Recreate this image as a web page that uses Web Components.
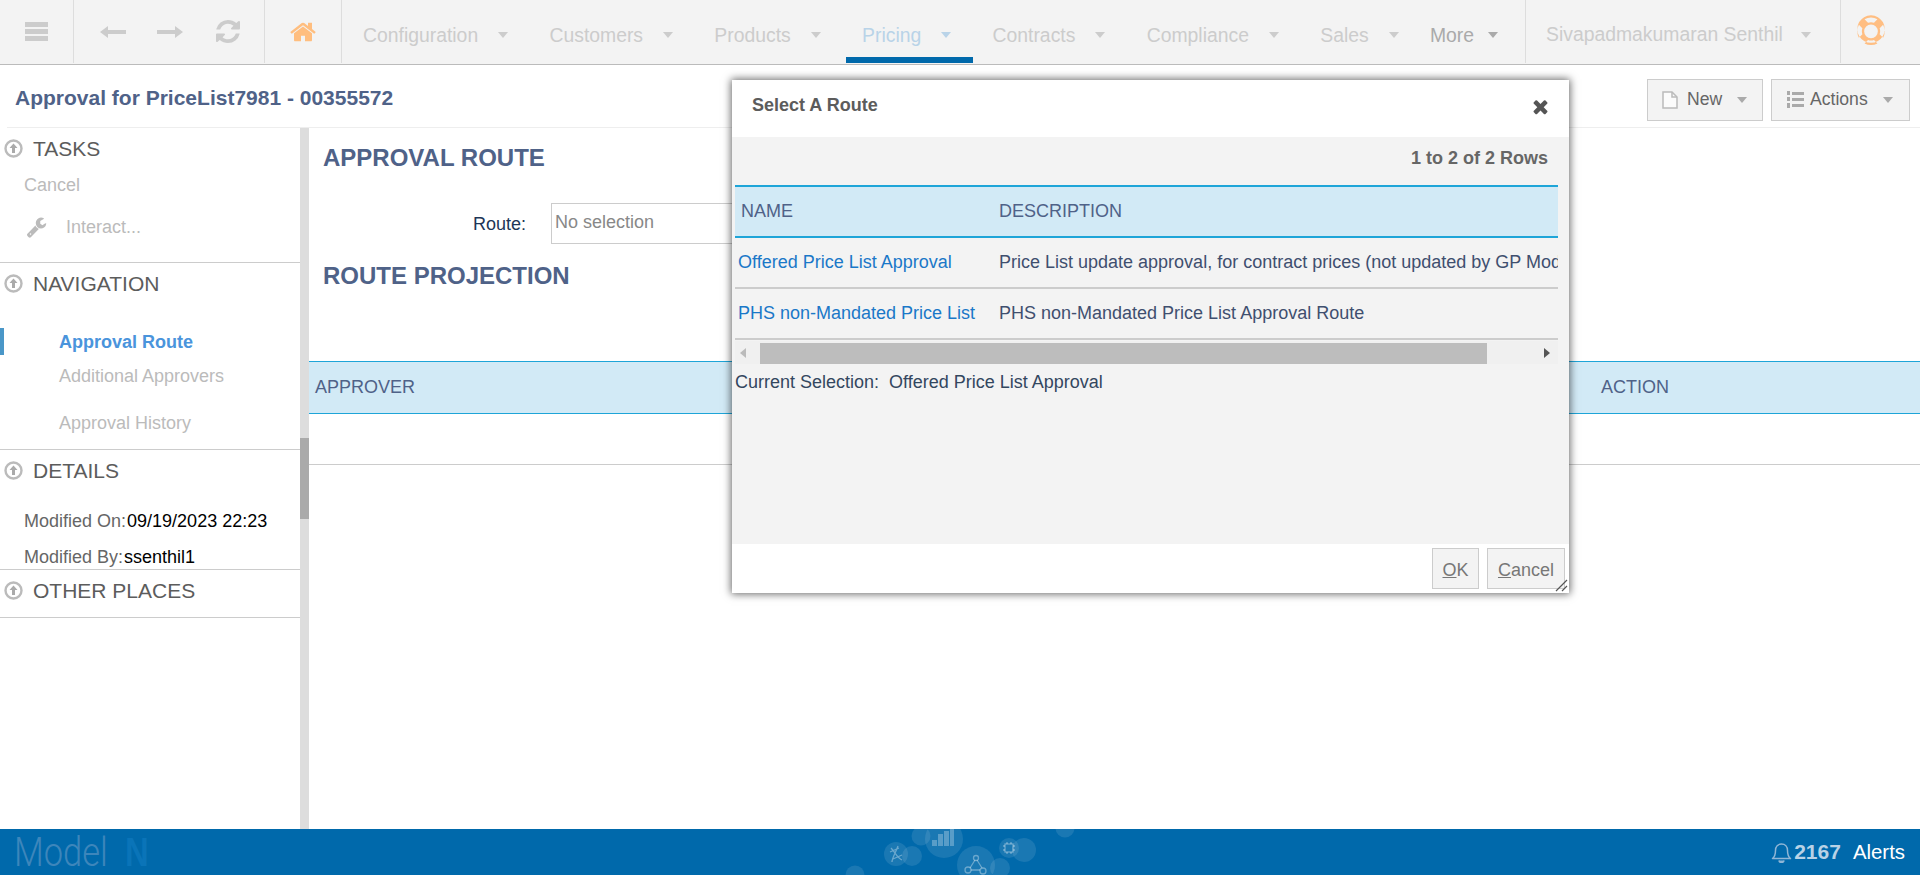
<!DOCTYPE html>
<html lang="en"><head><meta charset="utf-8"><title>Approval Route</title>
<style>
html,body{margin:0;height:875px;overflow:hidden;background:#fff;font-family:"Liberation Sans",Arial,sans-serif;font-size:18px}
</style></head><body>
<app-shell>
  <top-nav slot="top"></top-nav>
  <page-head slot="head" title-text="Approval for PriceList7981 - 00355572"></page-head>
  <side-panel slot="side">
    <side-section label="TASKS" h="134">
      <side-link kind="muted" top="0">Cancel</side-link>
      <side-link kind="tool" top="8">Interact...</side-link>
    </side-section>
    <side-section label="NAVIGATION" h="186">
      <side-link kind="active" top="22">Approval Route</side-link>
      <side-link kind="sub" top="0">Additional Approvers</side-link>
      <side-link kind="sub" top="13">Approval History</side-link>
    </side-section>
    <side-section label="DETAILS" h="119">
      <side-link kind="kv" top="14" k="Modified On:">09/19/2023 22:23</side-link>
      <side-link kind="kv" top="2" k="Modified By:">ssenthil1</side-link>
    </side-section>
    <side-section label="OTHER PLACES" h="47"></side-section>
  </side-panel>
  <route-main slot="main"></route-main>
  <foot-bar slot="foot"></foot-bar>
  <route-dialog slot="over"></route-dialog>
</app-shell>
<script>
const def=(name,html,setup)=>customElements.define(name,class extends HTMLElement{
  constructor(){super();const r=this.attachShadow({mode:'open'});
    const fill=typeof html==='function'?html(this):html;r.innerHTML=fill;}
  connectedCallback(){if(typeof html==='function'){this.shadowRoot.innerHTML=html(this)} if(setup)setup(this)}
});
const F='viewBox="0 0 1792 1792" fill="currentColor"';
const P={
 home:'M1472 992v480q0 26-19 45t-45 19h-384v-384h-256v384h-384q-26 0-45-19t-19-45v-480q0-1 .5-3t.5-3l575-474 575 474q1 2 1 6zm223-69l-62 74q-8 9-21 11h-3q-13 0-21-7l-692-577-692 577q-12 8-24 7-13-2-21-11l-62-74q-8-10-7-23.500t11-21.500l719-599q32-26 76-26t76 26l244 204v-195q0-14 9-23t23-9h192q14 0 23 9t9 23v408l219 182q10 8 11 21.500t-7 23.500z',
 refresh:'M1639 1056q0 5-1 7-64 268-268 434.500t-478 166.500q-146 0-282.500-55t-243.500-157l-129 129q-19 19-45 19t-45-19-19-45v-448q0-26 19-45t45-19h448q26 0 45 19t19 45-19 45l-137 137q71 66 161 102t187 36q134 0 250-65t186-179q11-17 53-117 8-23 30-23h192q13 0 22.500 9.500t9.500 22.500zm25-800v448q0 26-19 45t-45 19h-448q-26 0-45-19t-19-45 19-45l138-138q-148-137-349-137-134 0-250 65t-186 179q-11 17-53 117-8 23-30 23h-199q-13 0-22.500-9.500t-9.500-22.500v-7q65-268 270-434.500t480-166.500q146 0 284 55.500t245 156.500l130-129q19-19 45-19t45 19 19 45z',
 wrench:'M448 1472q0-26-19-45t-45-19-45 19-19 45 19 45 45 19 45-19 19-45zm644-420l-682 682q-37 37-90 37-52 0-91-37l-106-108q-38-36-38-90 0-53 38-91l681-681q39 98 114.500 173.500t173.500 114.500zm634-435q0 39-23 106-47 134-164.500 217.500t-258.500 83.500q-185 0-316.500-131.500t-131.500-316.500 131.500-316.500 316.500-131.500q58 0 121.500 16.500t107.500 46.500q16 11 16 28t-16 28l-293 169v224l193 107q5-3 79-48.500t135.500-81 70.500-35.500q15 0 23.500 10t8.500 25z',
 times:'M1490 1322q0 40-28 68l-136 136q-28 28-68 28t-68-28l-294-294-294 294q-28 28-68 28t-68-28l-136-136q-28-28-28-68t28-68l294-294-294-294q-28-28-28-68t28-68l136-136q28-28 68-28t68 28l294 294 294-294q28-28 68-28t68 28l136 136q28 28 28 68t-28 68l-294 294 294 294q28 28 28 68z',
 ring:'M896 128q209 0 385.500 103t279.500 279.500 103 385.500-103 385.500-279.500 279.500-385.500 103-385.500-103-279.500-279.500-103-385.500 103-385.500 279.500-279.500 385.500-103zm0 128q-190 0-361 90l194 194q82-28 167-28t167 28l194-194q-171-90-361-90zm-678 1129l194-194q-28-82-28-167t28-167l-194-194q-90 171-90 361t90 361zm678 407q190 0 361-90l-194-194q-82 28-167 28t-167-28l-194 194q171 90 361 90zm0-384q159 0 271.500-112.500t112.500-271.500-112.500-271.500-271.500-112.500-271.500 112.500-112.500 271.500 112.500 271.500 271.500 112.500zm484-217l194 194q90-171 90-361t-90-361l-194 194q28 82 28 167t-28 167z'
};
const svg=(p,w,h,extra='')=>`<svg width="${w}" height="${h}" ${F} preserveAspectRatio="none" style="display:block;${extra}"><path d="${p}"/></svg>`;

def('app-shell',`<style>
:host{display:flex;flex-direction:column;width:1920px;height:875px;position:relative}
.body{display:flex;flex:1;min-height:0}
::slotted([slot=main]){flex:1}
</style>
<slot name="top"></slot><slot name="head"></slot>
<div class="body"><slot name="side"></slot><slot name="main"></slot></div>
<slot name="foot"></slot><slot name="over"></slot>`);

def('nav-item',el=>{
 const on=el.hasAttribute('active'),more=el.hasAttribute('more');
 const c=on?'#b9d3e8':more?'#aaa':'#ccc';
 return `<style>
:host{display:flex;align-items:center;height:64px;box-sizing:border-box;position:relative;padding:6px 22px 0 16px;margin-left:${el.getAttribute('ml')||0}px;margin-right:3.3px;color:${c};font-size:19.36px;white-space:nowrap;flex:none}
i{display:block;width:0;height:0;border:5.5px solid transparent;border-top:6px solid ${c};border-bottom:0;margin-left:${el.getAttribute('cg')||20}px}
b{position:absolute;left:0;right:0;top:57px;height:6px;background:#0069ab;display:${on?'block':'none'}}
</style><slot></slot><i></i><b></b>`});

def('nav-cell',el=>`<style>
:host{display:flex;align-items:center;justify-content:${el.getAttribute('j')||'center'};box-sizing:border-box;flex:none;height:63px;width:${el.getAttribute('w')}px;border-right:1px solid #ddd;gap:${el.getAttribute('g')||0}px;padding-left:${el.getAttribute('pl')||0}px;color:${el.getAttribute('c')||'#ccc'}}
</style><slot></slot>`);

def('top-nav',`<style>
:host{display:flex;height:64px;background:#f3f3f3;border-bottom:1px solid #bbb;flex:none}
.l{display:flex;height:63px;border-right:1px solid #ddd}
</style>
<nav-cell w="74"><svg width="23" height="19" fill="currentColor" style="display:block"><rect width="23" height="5"/><rect y="7" width="23" height="5"/><rect y="14" width="23" height="5"/></svg></nav-cell>
<nav-cell w="191" j="flex-start" pl="26" g="31">
 <svg width="26" height="12" fill="currentColor" style="display:block"><path d="M0 6L8 0V4H26V8H8V12Z"/></svg>
 <svg width="26" height="12" fill="currentColor" style="display:block"><path d="M26 6L18 0V4H0V8H18V12Z"/></svg>
 ${svg(P.refresh,28,27)}
</nav-cell>
<nav-cell w="77" c="#ffbe7f">${svg(P.home,28,26)}</nav-cell>
<div class="l" style="padding-left:5px;flex:none;width:1184px;box-sizing:border-box">
<nav-item>Configuration</nav-item><nav-item>Customers</nav-item><nav-item>Products</nav-item><nav-item active>Pricing</nav-item><nav-item>Contracts</nav-item><nav-item>Compliance</nav-item><nav-item>Sales</nav-item><nav-item more ml="-10" cg="14">More</nav-item>
</div>
<nav-cell w="315" j="flex-start" pl="4"><nav-item cg="18">Sivapadmakumaran Senthil</nav-item></nav-cell>
<nav-cell w="79" j="flex-start" pl="14" c="#ffbe82" style="border:0">${svg(P.ring,32,32,'margin-top:-6px')}</nav-cell>`);

def('tool-button',el=>`<style>
:host{display:flex;align-items:center;box-sizing:border-box;height:42px;width:${el.getAttribute('w')}px;background:#f3f3f3;border:1px solid #ccc;color:#666;padding-left:14px;flex:none;font-size:17.6px}
.t{margin-left:${el.getAttribute('tg')||9}px;margin-top:-2px}
i{width:0;height:0;border:5.5px solid transparent;border-top:6px solid #aaa;border-bottom:0;margin-left:${el.getAttribute('cg')||16}px}
</style><slot name="icon"></slot><span class="t"><slot></slot></span><i></i>`);

def('page-head',el=>`<style>
:host{display:block;flex:none}
.r{display:flex;justify-content:space-between;align-items:center;height:62px;padding:0 10px 0 15px;box-sizing:border-box}
h1{margin:4px 0 0;font-size:21px;font-weight:bold;color:#4f6288}
.b{display:flex;gap:8px;margin-top:8px}
.line{margin-left:7px;border-bottom:1px solid #eee}
</style><div class="r"><h1>${el.getAttribute('title-text')||''}</h1><div class="b">
<tool-button w="116" tg="9" cg="15"><svg slot="icon" width="16" height="18" viewBox="0 0 16 18" fill="#fbfbfb" stroke="#bbb" stroke-width="1.5" style="display:block"><path d="M1 1H10L15 6V17H1Z"/><path d="M10 1V6H15" fill="none"/></svg>New</tool-button>
<tool-button w="139" tg="6" cg="15"><svg slot="icon" width="18" height="20" viewBox="0 0 18 20" fill="#aaa" style="display:block"><rect x="6" y="2" width="12" height="3"/><rect x="6" y="8" width="12" height="3"/><rect x="6" y="14" width="12" height="3"/><rect x="1" y="1" width="3" height="4"/><rect x="1" y="7" width="3" height="4"/><rect x="1" y="13" width="3" height="5"/></svg>Actions</tool-button>
</div></div><div class="line"></div>`);

def('side-panel',`<style>
:host{display:flex;flex:none;width:309px;height:701px}
.c{width:300px;flex:none}
.t{width:9px;background:#ddd;flex:none}
.th{margin-top:310px;height:81px;background:#aaa}
</style><div class="c"><slot></slot></div><div class="t"><div class="th"></div></div>`);

def('side-section',el=>`<style>
:host{display:block;box-sizing:content-box;height:${el.getAttribute('h')}px;border-bottom:1px solid #ccc;overflow:hidden}
.h{display:flex;align-items:center;height:40px;box-sizing:border-box;padding:1px 0 0 4px;color:#5c5c5c;font-size:21px;gap:10px}
svg{display:block;flex:none}
</style><div class="h"><svg width="19" height="19" viewBox="0 0 19 19"><circle cx="9.5" cy="9.500" r="8" fill="none" stroke="#bbb" stroke-width="2.4"/><path d="M9.500 4.500L13.500 9H11V14H8V9H5.500Z" fill="#aaa"/></svg><span>${el.getAttribute('label')}</span></div><slot></slot>`);

def('side-link',el=>{
 const k=el.getAttribute('kind'),top=el.getAttribute('top')||0;
 const base=`:host{display:flex;align-items:center;height:34px;margin-top:${top}px;position:relative;white-space:nowrap}`;
 if(k==='muted')return `<style>${base}:host{color:#bbb;padding-left:24px}</style><slot></slot>`;
 if(k==='tool')return `<style>${base}:host{color:#bbb;padding-left:26px}svg{margin-right:19px;color:#bbb}</style>${svg(P.wrench,21,22)}<slot></slot>`;
 if(k==='active')return `<style>${base}:host{color:#4a94dc;font-weight:bold;padding-left:59px}b{position:absolute;left:0;top:3px;width:4px;height:27px;background:#4a97c8}</style><b></b><slot></slot>`;
 if(k==='sub')return `<style>${base}:host{color:#bbb;padding-left:59px}</style><slot></slot>`;
 return `<style>${base}:host{color:#000;padding-left:24px}span{color:#666;margin-right:1px}</style><span>${el.getAttribute('k')}</span><slot></slot>`;
});

def('route-main',`<style>
:host{display:block;min-width:0;height:701px;color:#4f6288;overflow:hidden}
h2{margin:0;font-size:24px;line-height:28px;font-weight:bold;padding-left:14px}
.f{display:flex;align-items:center;margin:31px 0 18px;height:41px}
label{width:217px;text-align:right;color:#1d3557;flex:none;margin-top:2px}
.i{margin-left:25px;width:320px;height:41px;box-sizing:border-box;border:1px solid #ccc;color:#888;padding:0 3px;display:flex;align-items:center}
.i span{margin-top:-2px}
.th{display:grid;grid-template-columns:1286px 1fr;height:51px;align-items:center;background:#d2eaf6;border-top:1px solid #1ea5d8;border-bottom:1px solid #1ea5d8;margin-top:71px}
.th div{padding-left:6px}
.e{height:50px;border-bottom:1px solid #ccc}
</style>
<h2 style="margin-top:16px">APPROVAL ROUTE</h2>
<div class="f"><label>Route:</label><div class="i"><span>No selection</span></div></div>
<h2>ROUTE PROJECTION</h2>
<div class="th"><div>APPROVER</div><div>ACTION</div></div>
<div class="e"></div>`);

def('route-dialog',`<style>
:host{position:absolute;left:732px;top:80px;width:837px;height:513px;display:flex;flex-direction:column;background:#fff;box-shadow:0 0 8px 1px rgba(0,0,0,.6);color:#3f4f6f;font-size:18px}
.hd{height:57px;flex:none;display:flex;align-items:center;justify-content:space-between;padding:0 18px 0 20px;box-sizing:border-box}
.hd b{color:#5c5c5c;margin-top:-7px}
.hd svg{color:#555;margin-top:-5px}
.bd{flex:1;min-height:0;background:#f3f3f3;padding:0 11px 0 3px;display:flex;flex-direction:column}
.cnt{height:48px;flex:none;text-align:right;font-weight:bold;color:#666;padding:11px 10px 0 0;box-sizing:border-box}
.tb{overflow:hidden;flex:none}
.r{display:grid;grid-template-columns:258px 1fr;white-space:nowrap;align-items:center;box-sizing:border-box}
.r.h{height:53px;background:#d2eaf6;border-top:2px solid #1ea5d8;border-bottom:2px solid #1ea5d8;color:#4f6288}
.r.h div:first-child{padding-left:6px}
.r.d{height:51px;border-bottom:2px solid #ccc}
.r.d div:first-child{padding-left:3px;color:#1a78c8}
.r.d:first-of-type div{margin-top:2px}
.r div+div{padding-left:6px;overflow:hidden}
.sb{height:23px;background:#f0f0f0;margin-top:1px;display:flex;align-items:flex-start;position:relative;flex:none}
.sb b{margin:2px 0 0 25px;width:727px;height:21px;background:#bdbdbd;display:block}
.sb i{position:absolute;top:7px;width:0;height:0;border:5px solid transparent}
.cur{margin-top:8px;white-space:pre;color:#33475f}
.ft{height:49px;flex:none;display:flex;justify-content:flex-end;gap:8px;padding:4px 4px 0 0;box-sizing:border-box;position:relative}
.btn{height:41px;border:1px solid #ccc;background:#f3f3f3;color:#777;display:flex;align-items:center;justify-content:center;box-sizing:border-box;padding-top:4px}
.grip{position:absolute;right:1px;bottom:1px}
</style>
<div class="hd"><b>Select A Route</b>${svg(P.times,21,21)}</div>
<div class="bd">
 <div class="cnt">1 to 2 of 2 Rows</div>
 <div class="tb">
  <div class="r h"><div>NAME</div><div>DESCRIPTION</div></div>
  <div class="r d"><div>Offered Price List Approval</div><div>Price List update approval, for contract prices (not updated by GP Model)</div></div>
  <div class="r d"><div>PHS non-Mandated Price List</div><div>PHS non-Mandated Price List Approval Route</div></div>
 </div>
 <div class="sb"><i style="left:5px;border-right:6px solid #bbb;border-left:0"></i><b></b><i style="right:8px;border-left:6px solid #555;border-right:0"></i></div>
 <div class="cur">Current Selection:  Offered Price List Approval</div>
</div>
<div class="ft"><div class="btn" style="width:47px"><span><u>O</u>K</span></div><div class="btn" style="width:78px"><span><u>C</u>ancel</span></div>
<svg class="grip" width="13" height="13" viewBox="0 0 13 13" stroke="#555" stroke-width="1.2"><path d="M1 12L12 1M7 12L12 7"/></svg></div>`);

def('foot-bar',`<style>
:host{display:flex;align-items:center;justify-content:space-between;height:46px;flex:none;background:#0069ab;position:relative;overflow:hidden}
.logo{display:flex;align-items:center;padding-left:14px;font-size:41px;line-height:46px;height:46px;white-space:nowrap}
.m{font-family:Roboto,"Liberation Sans",sans-serif;font-weight:300;color:#3d86bb;display:inline-block;transform:scaleX(.84);transform-origin:left center;width:94px}
.n{font-family:"Liberation Sans",sans-serif;font-weight:bold;color:#0a74b8;margin-left:17px;display:inline-block;transform:scaleX(.8);transform-origin:left center}
.a{display:flex;align-items:center;padding-right:15px;font-size:20.4px;color:#fff;white-space:nowrap}
.a svg{margin-right:2px;color:#8fb6d6}
.a b{color:#b8d2e6;font-size:21px;margin-right:12px}
.d{position:absolute;left:820px;top:0}
</style>
<div class="logo"><span class="m">Model</span><span class="n">N</span></div>
<svg class="d" width="300" height="46" viewBox="820 829 300 46" fill="#fff">
 <g fill-opacity=".1"><circle cx="896" cy="854" r="12"/><circle cx="912" cy="856" r="10"/><circle cx="921" cy="836" r="9.500"/><circle cx="944" cy="839" r="19"/><circle cx="976" cy="865" r="19"/><circle cx="1000" cy="868" r="10"/><circle cx="1009" cy="848" r="10"/><circle cx="1024" cy="850" r="12"/><circle cx="1065" cy="828" r="9.500"/><circle cx="855" cy="875" r="9.500"/></g>
 <g fill-opacity=".28"><rect x="932" y="840" width="5" height="6"/><rect x="938" y="834" width="5" height="12"/><rect x="944" y="831" width="5" height="15"/><rect x="950" y="829" width="4" height="17"/></g>
 <g fill="none" stroke="#fff" stroke-opacity=".35" stroke-width="1.3"><circle cx="976" cy="858" r="2.500"/><circle cx="968" cy="870" r="3"/><circle cx="983" cy="871" r="3"/><path d="M975 860L970 868M977 860L982 868M971 870H980"/><path d="M891 848C895 852 897 858 902 860M898 846C896 852 892 858 892 862M890 852L899 848M893 859L902 855"/><rect x="1005" y="844" width="8" height="8"/><path d="M1003 846h2M1003 850h2M1013 846h2M1013 850h2M1007 842v2M1011 842v2M1007 852v2M1011 852v2"/></g>
</svg>
<div class="a"><svg width="21" height="21" viewBox="0 0 21 21" fill="none" stroke="currentColor" stroke-width="1.500"><path d="M1.500 16.500C4 14.500 4.500 12 4.500 8.500C4.500 4.500 7 2 10.500 2S16.500 4.500 16.500 8.500C16.500 12 17 14.500 19.500 16.500Z" stroke-linejoin="round"/><path d="M8 18.500A2.500 2 0 0 0 13 18.500" fill="currentColor"/></svg><b>2167</b>Alerts</div>`);
</script>
</body></html>
